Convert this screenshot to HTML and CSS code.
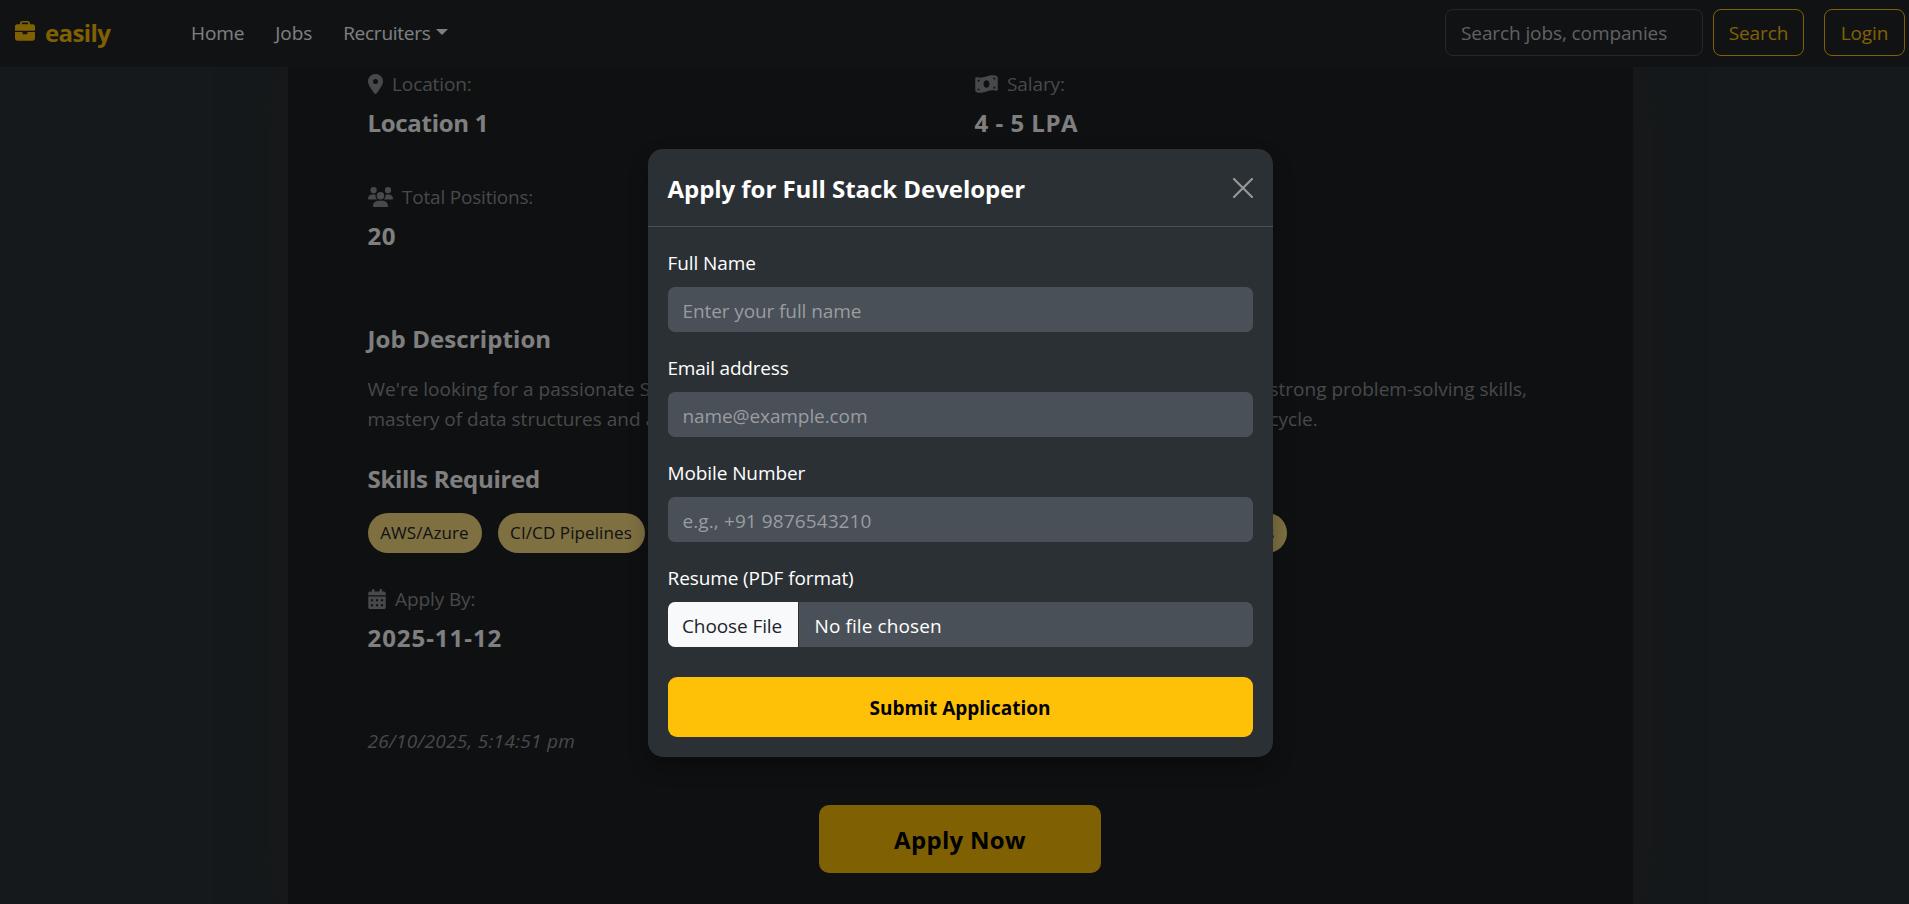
FILE: index.html
```html
<!DOCTYPE html>
<html lang="en">
<head>
<meta charset="utf-8">
<title>easily - Full Stack Developer</title>
<link rel="stylesheet" href="styles.css">
</head>
<body>
<div class="page">
  <nav class="navbar">
    <a class="brand"><svg class="brand-icon" viewBox="0 0 512 512"><path fill-rule="evenodd" d="M128 56V80H56C25 80 0 105 0 136V248H512V136c0-31-25-56-56-56H384V56c0-30.900-25.100-56-56-56H184c-30.900 0-56 25.100-56 56zM184 40H328c4.400 0 8 3.600 8 8V80H176V48c0-4.400 3.600-8 8-8zM512 280H320v24c0 17.700-14.300 32-32 32H224c-17.700 0-32-14.300-32-32V280H0V440c0 35.300 28.700 64 64 64H448c35.300 0 64-28.700 64-64V280z"/></svg><span>easily</span></a>
    <div class="links"><a>Home</a><a>Jobs</a><a class="dropdown">Recruiters</a></div>
    <form class="search"><input class="search-input" type="text" placeholder="Search jobs, companies"><button class="btn-outline" type="button">Search</button></form>
    <button class="btn-outline login" type="button">Login</button>
  </nav>
  <main class="card">
    <section class="facts">
      <div class="fact">
        <div class="label"><svg style="width:15px" viewBox="0 0 384 512"><path d="M215.700 499.200C267 435 384 279.400 384 192C384 86 298 0 192 0S0 86 0 192c0 87.400 117 243 168.300 307.200c12.300 15.300 35.100 15.300 47.400 0zM192 128a64 64 0 1 1 0 128 64 64 0 1 1 0-128z"/></svg><span>Location:</span></div>
        <div class="value">Location 1</div>
      </div>
      <div class="fact">
        <div class="label"><svg style="width:23px" viewBox="0 0 576 512"><path fill-rule="evenodd" d="M0 113C0 90 20 75 42 82C130 106 208 91 288 66C366 40 446 20 540 48C562 54 576 74 576 96V399C576 422 556 437 534 430C446 406 368 421 288 446C210 472 130 492 36 464C14 458 0 438 0 416zM288 160c-44 0-76 43-76 96s32 96 76 96s76-43 76-96s-32-96-76-96zM64 368V416H120C120 390 95 368 64 368zM64 200C95 200 120 176 120 145L64 144zM512 312C481 312 456 336 456 368L512 368zM456 96C456 126 481 144 512 144V96z"/></svg><span>Salary:</span></div>
        <div class="value salary">4 - 5 LPA</div>
      </div>
      <div class="fact">
        <div class="label"><svg style="width:25px" viewBox="0 0 640 512"><path d="M144 0a80 80 0 1 1 0 160A80 80 0 1 1 144 0zM512 0a80 80 0 1 1 0 160A80 80 0 1 1 512 0zM0 298.700C0 239.800 47.800 192 106.700 192h42.700c15.900 0 31 3.500 44.600 9.700c-1.300 7.200-1.900 14.700-1.900 22.300c0 38.200 16.800 72.500 43.300 96H21.300C9.600 320 0 310.400 0 298.700zM405.300 320c26.600-23.500 43.300-57.800 43.300-96c0-7.600-.7-15-1.900-22.300c13.600-6.300 28.700-9.700 44.600-9.700h42.700C592.200 192 640 239.800 640 298.700c0 11.800-9.600 21.300-21.300 21.300H405.300zM224 224a96 96 0 1 1 192 0 96 96 0 1 1-192 0zM128 485.300C128 411.700 187.700 352 261.300 352H378.700C452.300 352 512 411.700 512 485.300c0 14.700-11.900 26.700-26.700 26.700H154.700c-14.700 0-26.700-11.900-26.700-26.700z"/></svg><span class="positions">Total Positions:</span></div>
        <div class="value count">20</div>
      </div>
    </section>
    <h2 class="heading job">Job Description</h2>
    <p class="description"><span>We're looking for a passionate S</span><span>strong problem-solving skills,</span><span>mastery of data structures and a</span><span>cycle.</span></p>
    <h2 class="heading">Skills Required</h2>
    <div class="skills"><span class="pill aws">AWS/Azure</span><span class="pill cicd">CI/CD Pipelines</span><span class="pill last">s</span></div>
    <div class="label"><svg style="width:18px" viewBox="0 0 448 512"><path fill-rule="evenodd" d="M128 0c17.700 0 32 14.300 32 32V64H288V32c0-17.700 14.300-32 32-32s32 14.300 32 32V64h48c26.500 0 48 21.500 48 48v48H0V112C0 85.500 21.500 64 48 64H96V32c0-17.700 14.300-32 32-32zM0 192H448V464c0 26.500-21.500 48-48 48H48c-26.500 0-48-21.500-48-48zM68 260v56h56v-56zM196 260v56h56v-56zM324 260v56h56v-56zM68 388v56h56v-56zM196 388v56h56v-56zM324 388v56h56v-56z"/></svg><span>Apply By:</span></div>
    <div class="value date">2025-11-12</div>
    <div class="posted">26/10/2025, 5:14:51 pm</div>
    <button class="apply" type="button">Apply Now</button>
  </main>
</div>
<div class="backdrop">
  <section class="modal">
    <header class="modal-header"><h1 class="modal-title">Apply for Full Stack Developer</h1><svg class="close" viewBox="0 0 16 16"><path d="M.8.8 15.200 15.200M15.200.8.8 15.200"/></svg></header>
    <form class="modal-body">
      <label class="field"><span>Full Name</span><input type="text" placeholder="Enter your full name"></label>
      <label class="field"><span class="email">Email address</span><input type="text" placeholder="name@example.com"></label>
      <label class="field"><span>Mobile Number</span><input class="mobile" type="text" placeholder="e.g., +91 9876543210"></label>
      <div class="field"><span>Resume (PDF format)</span><div class="file"><span class="choose">Choose File</span><span class="chosen">No file chosen</span></div></div>
      <button class="submit" type="button">Submit Application</button>
    </form>
  </section>
</div>
</body>
</html>
```
FILE: styles.css
```css
* { box-sizing: border-box; }
body {
  margin: 0;
  height: 904px;
  overflow: hidden;
  background: #2b3236;
  font: 19px/30px "Open Sans", "Noto Sans", sans-serif;
  letter-spacing: -0.1px;
}
h1, h2, p { margin: 0; }
button, input { font: inherit; letter-spacing: inherit; }
.page { width: 1920px; height: 904px; overflow: hidden; }
.navbar {
  position: relative;
  display: flex;
  align-items: center;
  height: 67px;
  padding: 0 15px 2px 15px;
  background: #212529;
  color: #fff;
}
.brand {
  display: flex;
  align-items: center;
  gap: 10px;
  width: 176px;
  color: #ffc107;
  font-size: 24px;
  font-weight: 700;
  letter-spacing: -0.6px;
}
.brand-icon { width: 20px; height: 20px; fill: #ffc107; margin-top: -3px; }
.links { display: flex; gap: 31px; flex: 1; }
.dropdown { letter-spacing: -0.25px; }
.dropdown::after {
  content: "";
  display: inline-block;
  margin-left: 5px;
  vertical-align: 5px;
  border: 6px solid transparent;
  border-top-color: #fff;
  border-bottom: 0;
}
.search { display: flex; gap: 10px; margin-right: 20px; }
.search-input {
  width: 258px;
  height: 47px;
  padding: 0 35px 0 15px;
  border: 1px solid #495057;
  border-radius: 8px;
  background: transparent;
  outline: 0;
}
.search-input::placeholder { color: #c0c2c4; opacity: 1; }
.btn-outline {
  width: 91px;
  height: 47px;
  padding: 0;
  border: 1px solid #ffc107;
  border-radius: 8px;
  background: transparent;
  color: #ffc107;
}
.login { width: 81px; }
.card {
  display: flex;
  flex-direction: column;
  width: 1345px;
  height: 837px;
  margin-left: 287.5px;
  padding: 2px 80px 0;
  background: #1e2123;
  box-shadow: 0 0 50px rgba(50, 47, 45, .9);
  color: #fff;
}
.facts { display: grid; grid-template-columns: 607px 1fr; row-gap: 44px; margin-bottom: 73px; }
.label { display: flex; align-items: center; gap: 9.5px; height: 30px; color: #909294; }
.label svg { height: 20px; fill: #909294; }
.positions { letter-spacing: -0.2px; }
.value, .heading { font-size: 24px; font-weight: 700; line-height: 30px; letter-spacing: -0.3px; }
.value { margin-top: 9px; }
.salary { letter-spacing: 0.5px; }
.count { letter-spacing: 0.6px; }
.date { letter-spacing: 0.95px; }
.job { letter-spacing: 0.1px; }
.description {
  display: grid;
  grid-template-columns: 902px 1fr;
  margin: 20px 0 30px;
  color: #909294;
  letter-spacing: 0;
  white-space: nowrap;
}
.skills { display: flex; gap: 16px; margin: 19px 0 31px; }
.pill {
  height: 40px;
  border-radius: 20px;
  background: #ffe083;
  color: #212529;
  font-size: 17px;
  line-height: 40px;
  letter-spacing: 0.1px;
  text-align: center;
}
.aws { width: 114px; }
.cicd { width: 147px; }
.last { width: 80px; margin-left: 546px; padding-right: 12px; text-align: right; }
.posted { margin: 73px 0 49px; color: #909294; font-style: italic; letter-spacing: 0.3px; }
.apply {
  align-self: center;
  width: 282px;
  height: 68px;
  padding: 2px 0 0;
  border: 0;
  border-radius: 10px;
  background: #ffc107;
  color: #000;
  font-size: 24px;
  font-weight: 700;
  letter-spacing: 0.3px;
}
.backdrop { position: absolute; top: 0; left: 0; width: 1909px; height: 904px; background: rgba(0, 0, 0, .5); }
.modal {
  width: 625px;
  height: 608px;
  margin: 149px 0 0 647.5px;
  border-radius: 15px;
  background: #2b3035;
  box-shadow: 0 10px 20px rgba(0, 0, 0, .3);
  color: #fff;
}
.modal-header {
  display: flex;
  align-items: center;
  justify-content: space-between;
  height: 78px;
  padding: 3px 20px 0;
  border-bottom: 1px solid #495057;
}
.modal-title { font-size: 24px; font-weight: 700; letter-spacing: -0.05px; }
.close { width: 20px; height: 20px; margin-top: -3px; fill: none; stroke: #95989a; stroke-width: 1.7; stroke-linecap: round; }
.modal-body { padding: 21px 20px 0; }
.field { display: block; margin-bottom: 20px; }
.field > span { display: block; margin: 0 0 9px; }
.field + .field { margin-top: 21px; }
.field > .email { letter-spacing: -0.2px; }
.field input, .file { display: block; width: 585px; height: 45px; border: 0; border-radius: 7px; background: #495057; }
.field input { padding: 2px 15px 0; outline: 0; }
.field input::placeholder { color: #9a9da1; opacity: 1; }
.field .mobile { letter-spacing: 0.1px; }
.field .file { display: flex; overflow: hidden; line-height: 48px; }
.choose { width: 131px; padding-left: 14.5px; background: #f8f9fa; color: #212529; border-right: 1px solid #2b3035; }
.chosen { padding-left: 16px; letter-spacing: 0.1px; }
.submit {
  width: 585px;
  height: 60px;
  margin-top: 10px;
  padding: 2px 0 0;
  border: 0;
  border-radius: 9px;
  background: #ffc107;
  color: #000;
  font-weight: 700;
  letter-spacing: 0;
}
```
